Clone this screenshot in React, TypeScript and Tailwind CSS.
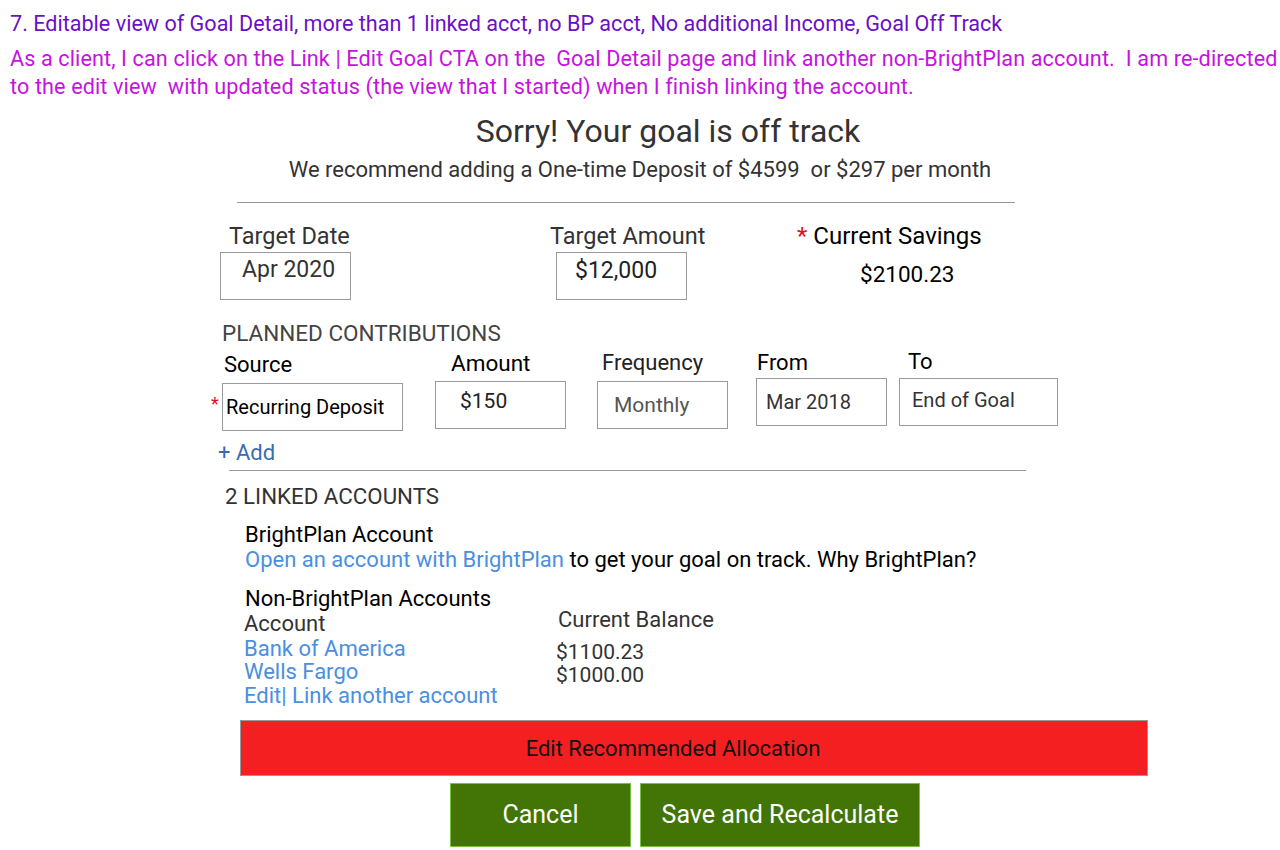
import React from "react";

const font = { fontFamily: "Roboto, 'Liberation Sans', sans-serif" };

const Box: React.FC<{ className?: string; textClass?: string; children: React.ReactNode }> = ({
  className = "",
  textClass = "",
  children,
}) => (
  <div className={`h-[48px] border border-[#9a9a9a] flex items-center whitespace-nowrap ${className}`}>
    <span className={textClass}>{children}</span>
  </div>
);

const App: React.FC = () => {
  return (
    <div className="w-[1280px] h-[850px] bg-white overflow-hidden" style={font}>
      {/* story header */}
      <div className="px-[10px] pt-[10px] text-[21.6px] leading-[28px] whitespace-nowrap">
        <p className="text-[#6a11c6]">
          7. Editable view of Goal Detail, more than 1 linked acct, no BP acct, No additional Income, Goal Off Track
        </p>
        <p className="mt-[7px] text-[#c613e0] tracking-[0.12px]">
          As a client, I can click on the Link | Edit Goal CTA on the&nbsp; Goal Detail page and link another
          non-BrightPlan account.&nbsp; I am re-directed
          <br />
          to the edit view&nbsp; with updated status (the view that I started) when I finish linking the account.
        </p>
      </div>

      {/* status */}
      <h1 className="mt-[10px] pl-[56px] text-center text-[32px] leading-[40px] text-[#333]">
        Sorry! Your goal is off track
      </h1>
      <p className="mt-[4px] text-center text-[22px] leading-[30px] text-[#333]">
        We recommend adding a One-time Deposit of $4599&nbsp; or $297 per month
      </p>
      <div className="ml-[237px] mt-[17px] w-[778px] border-t border-[#999]" />

      {/* goal fields */}
      <div className="flex mt-[18px] text-[23.5px] leading-[30px] whitespace-nowrap">
        <div className="ml-[220px] w-[131px]">
          <div className="pl-[9px] text-[#333]">Target Date</div>
          <Box className="mt-[1px] pl-[21px]" textClass="text-[#333] text-[23px] -mt-[12px]">
            Apr 2020
          </Box>
        </div>
        <div className="ml-[199px] w-[137px]">
          <div className="text-[#333]">Target Amount</div>
          <Box className="ml-[6px] mt-[1px] w-[131px] pl-[18px]" textClass="text-[#222] text-[23px] -mt-[10px]">
            $12,000
          </Box>
        </div>
        <div className="ml-[110px]">
          <div className="text-black text-[24px]">
            <span className="text-[#e0101a] mr-[6px]">*</span>Current Savings
          </div>
          <div className="mt-[8px] pl-[63px] text-[22.5px] text-black">$2100.23</div>
        </div>
      </div>

      {/* planned contributions */}
      <div className="ml-[222px] mt-[20px] text-[22.5px] leading-[26px] text-[#444]">PLANNED CONTRIBUTIONS</div>
      <div className="flex items-start mt-[2px] text-[22px] leading-[30px] whitespace-nowrap">
        <div className="ml-[211px] flex flex-col">
          <div className="pl-[13px] mt-[2px] text-black">Source</div>
          <div className="flex items-start mt-[3px]">
            <span className="text-[#e0101a] text-[18px] leading-[30px] mt-[6px] w-[11px]">*</span>
            <Box className="w-[181px] pl-[3px]" textClass="text-black text-[20px]">
              Recurring Deposit
            </Box>
          </div>
        </div>
        <div className="ml-[32px]">
          <div className="pl-[16px] text-black text-[22.5px]">Amount</div>
          <Box className="mt-[3px] w-[131px] pl-[24px]" textClass="text-[#222] text-[21px] -mt-[8px]">
            $150
          </Box>
        </div>
        <div className="ml-[31px]">
          <div className="pl-[5px] text-[#222]">Frequency</div>
          <Box className="mt-[3px] w-[131px] pl-[16px]" textClass="text-[#555] text-[21px]">
            Monthly
          </Box>
        </div>
        <div className="ml-[28px]">
          <div className="pl-[1px] text-black">From</div>
          <Box className="mt-[0px] w-[131px] pl-[9px]" textClass="text-[#333] text-[20px]">
            Mar 2018
          </Box>
        </div>
        <div className="ml-[12px]">
          <div className="pl-[9px] -mt-[1px] text-black">To</div>
          <Box className="mt-[1px] w-[159px] pl-[12px]" textClass="text-[#333] text-[20px] -mt-[4px]">
            End of Goal
          </Box>
        </div>
      </div>
      <div className="ml-[218px] mt-[7px] text-[22px] leading-[30px] text-[#3a6cb4]">+ Add</div>
      <div className="ml-[229px] mt-[2px] w-[797px] border-t border-[#999]" />

      {/* linked accounts */}
      <div className="ml-[225px] mt-[12px] text-[22.3px] leading-[26px] text-[#333]">2 LINKED ACCOUNTS</div>
      <div className="ml-[245px] mt-[13px] text-[22px] leading-[25px] text-black whitespace-nowrap">
        <div>BrightPlan Account</div>
        <div>
          <span className="text-[#4a8fe2]">Open an account with BrightPlan</span> to get your goal on track. Why
          BrightPlan?
        </div>
        <div className="mt-[16px] leading-[22px]">Non-BrightPlan Accounts</div>
        <div className="flex -ml-[1px] mt-[3px] leading-[22px]">
          <div className="w-[312px] text-[#333]">
            <div>Account</div>
            <div className="mt-[3px] text-[#4a8fe2]">Bank of America</div>
            <div className="mt-[1px] text-[#4a8fe2]">Wells Fargo</div>
            <div className="mt-[2px] text-[#4a8fe2]">Edit| Link another account</div>
          </div>
          <div className="text-[#333]">
            <div className="ml-[2px] -mt-[4px]">Current Balance</div>
            <div className="mt-[10px] text-[21px]">$1100.23</div>
            <div className="mt-[1px] text-[21px]">$1000.00</div>
          </div>
        </div>
      </div>

      {/* actions */}
      <div className="ml-[240px] mt-[13px] w-[908px] h-[56px] bg-[#f41f20] border border-[#999] flex items-center justify-center pr-[42px] text-[22px] text-[#111]">
        Edit Recommended Allocation
      </div>
      <div className="flex ml-[450px] mt-[7px] gap-[9px] text-[25px] text-white">
        <button className="w-[181px] h-[64px] bg-[#427505] border border-[#7ac142]">Cancel</button>
        <button className="w-[280px] h-[64px] bg-[#427505] border border-[#7ac142]">Save and Recalculate</button>
      </div>
    </div>
  );
};

export default App;
